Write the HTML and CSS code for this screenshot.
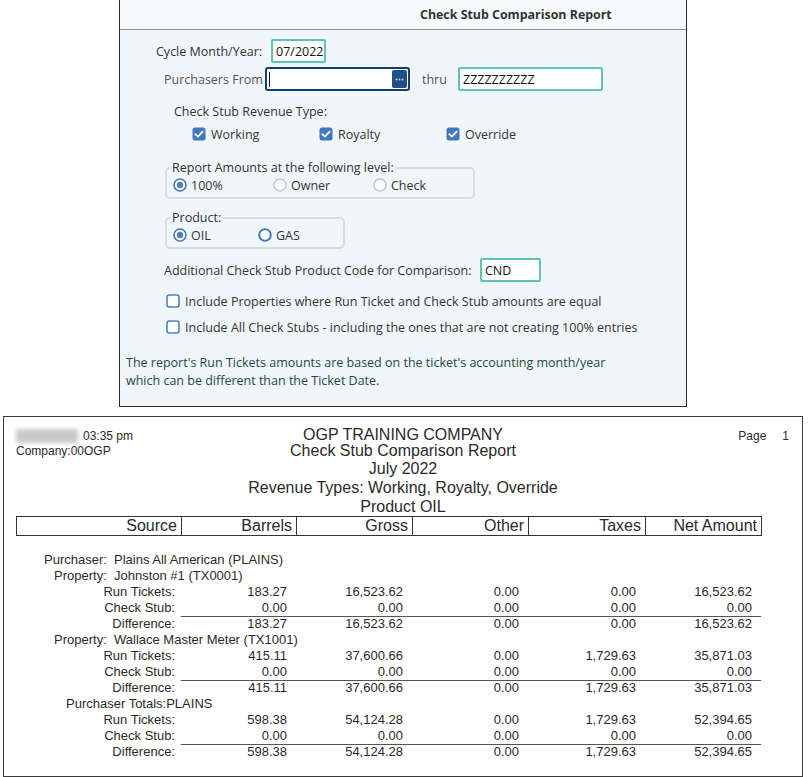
FILE: index.html
```html
<!DOCTYPE html>
<html>
<head>
<meta charset="utf-8">
<link rel="stylesheet" href="styles.css">
</head>
<body>
<div class="panel">
  <div class="panel-head">Check Stub Comparison Report</div>
  <div class="panel-body">
    <div class="row row-cycle">
      <span class="lbl">Cycle Month/Year:</span>
      <span class="input input-cycle">07/2022</span>
    </div>
    <div class="row row-purch">
      <span class="lbl lbl-gray lbl-purch">Purchasers From</span>
      <span class="input input-lookup"><span class="caret"></span><span class="lookup-btn"><svg viewBox="0 0 15 18" width="15" height="18"><circle cx="4.5" cy="9.5" r="1" fill="#c7d4e4"/><circle cx="7.5" cy="9.5" r="1" fill="#c7d4e4"/><circle cx="10.5" cy="9.5" r="1" fill="#c7d4e4"/></svg></span></span>
      <span class="lbl lbl-gray thru">thru</span>
      <span class="input input-thru">ZZZZZZZZZZ</span>
    </div>
    <div class="row row-revtitle"><span class="lbl">Check Stub Revenue Type:</span></div>
    <div class="row row-checks">
      <span class="check-item"><svg class="cb" viewBox="0 0 14 14"><rect x="0.5" y="0.5" width="13" height="13" rx="2.5" fill="#4079c0"/><path d="M3.3 7.2 L5.9 9.6 L10.6 4.6" fill="none" stroke="#fff" stroke-width="1.8" stroke-linecap="round" stroke-linejoin="round"/></svg>Working</span>
      <span class="check-item"><svg class="cb" viewBox="0 0 14 14"><rect x="0.5" y="0.5" width="13" height="13" rx="2.5" fill="#4079c0"/><path d="M3.3 7.2 L5.9 9.6 L10.6 4.6" fill="none" stroke="#fff" stroke-width="1.8" stroke-linecap="round" stroke-linejoin="round"/></svg>Royalty</span>
      <span class="check-item"><svg class="cb" viewBox="0 0 14 14"><rect x="0.5" y="0.5" width="13" height="13" rx="2.5" fill="#4079c0"/><path d="M3.3 7.2 L5.9 9.6 L10.6 4.6" fill="none" stroke="#fff" stroke-width="1.8" stroke-linecap="round" stroke-linejoin="round"/></svg>Override</span>
    </div>
    <fieldset class="group group-level">
      <legend>Report Amounts at the following level:</legend>
      <div class="radios">
        <span class="radio-item w100"><svg class="rb" viewBox="0 0 14 14"><circle cx="7" cy="7" r="6" fill="#fff" stroke="#4a7ab8" stroke-width="1.6"/><circle cx="7" cy="7" r="3.2" fill="#4f80bd"/></svg>100%</span>
        <span class="radio-item w100"><svg class="rb" viewBox="0 0 14 14"><circle cx="7" cy="7" r="6" fill="#fff" stroke="#c3c7cc" stroke-width="1.5"/></svg>Owner</span>
        <span class="radio-item"><svg class="rb" viewBox="0 0 14 14"><circle cx="7" cy="7" r="6" fill="#fff" stroke="#c3c7cc" stroke-width="1.5"/></svg>Check</span>
      </div>
    </fieldset>
    <fieldset class="group group-product">
      <legend>Product:</legend>
      <div class="radios">
        <span class="radio-item w85"><svg class="rb" viewBox="0 0 14 14"><circle cx="7" cy="7" r="6" fill="#fff" stroke="#4a7ab8" stroke-width="1.6"/><circle cx="7" cy="7" r="3.2" fill="#4f80bd"/></svg>OIL</span>
        <span class="radio-item"><svg class="rb" viewBox="0 0 14 14"><circle cx="7" cy="7" r="5.8" fill="#fff" stroke="#3f78bd" stroke-width="2"/></svg>GAS</span>
      </div>
    </fieldset>
    <div class="row row-addl">
      <span class="lbl lbl-addl">Additional Check Stub Product Code for Comparison:</span>
      <span class="input input-cnd">CND</span>
    </div>
    <div class="row row-opt">
      <svg class="cb" viewBox="0 0 14 14"><rect x="1" y="1" width="12" height="12" rx="2.5" fill="#fff" stroke="#4f82bf" stroke-width="1.6"/></svg>
      <span class="lbl">Include Properties where Run Ticket and Check Stub amounts are equal</span>
    </div>
    <div class="row row-opt row-opt2">
      <svg class="cb" viewBox="0 0 14 14"><rect x="1" y="1" width="12" height="12" rx="2.5" fill="#fff" stroke="#4f82bf" stroke-width="1.6"/></svg>
      <span class="lbl">Include All Check Stubs - including the ones that are not creating 100% entries</span>
    </div>
    <p class="note">The report's Run Tickets amounts are based on the ticket's accounting month/year<br>which can be different than the Ticket Date.</p>
  </div>
</div>

<div class="report">
  <div class="rep-head">
    <div class="rep-left">
      <div><span class="blur"></span>03:35 pm</div>
      <div>Company:00OGP</div>
    </div>
    <div class="rep-titles">
      <div class="t1">OGP TRAINING COMPANY</div>
      <div class="t2">Check Stub Comparison Report</div>
      <div class="t3">July 2022</div>
      <div class="t4">Revenue Types: Working, Royalty, Override</div>
      <div class="t5">Product OIL</div>
    </div>
    <div class="rep-right">Page<span class="pgno">1</span></div>
  </div>
  <div class="col-head">
    <div>Source</div><div>Barrels</div><div>Gross</div><div>Other</div><div>Taxes</div><div>Net Amount</div>
  </div>
  <div class="rows">
    <div class="info"><span class="k p-purch">Purchaser:</span><span>Plains All American (PLAINS)</span></div>
    <div class="info"><span class="k p-prop">Property:</span><span>Johnston #1 (TX0001)</span></div>
    <div class="line"><span>Run Tickets:</span><span>183.27</span><span>16,523.62</span><span>0.00</span><span>0.00</span><span>16,523.62</span></div>
    <div class="line"><span>Check Stub:</span><span>0.00</span><span>0.00</span><span>0.00</span><span>0.00</span><span>0.00</span></div>
    <div class="line diff"><span>Difference:</span><span>183.27</span><span>16,523.62</span><span>0.00</span><span>0.00</span><span>16,523.62</span></div>
    <div class="info"><span class="k p-prop">Property:</span><span>Wallace Master Meter (TX1001)</span></div>
    <div class="line"><span>Run Tickets:</span><span>415.11</span><span>37,600.66</span><span>0.00</span><span>1,729.63</span><span>35,871.03</span></div>
    <div class="line"><span>Check Stub:</span><span>0.00</span><span>0.00</span><span>0.00</span><span>0.00</span><span>0.00</span></div>
    <div class="line diff"><span>Difference:</span><span>415.11</span><span>37,600.66</span><span>0.00</span><span>1,729.63</span><span>35,871.03</span></div>
    <div class="totals">Purchaser Totals:PLAINS</div>
    <div class="line"><span>Run Tickets:</span><span>598.38</span><span>54,124.28</span><span>0.00</span><span>1,729.63</span><span>52,394.65</span></div>
    <div class="line"><span>Check Stub:</span><span>0.00</span><span>0.00</span><span>0.00</span><span>0.00</span><span>0.00</span></div>
    <div class="line diff"><span>Difference:</span><span>598.38</span><span>54,124.28</span><span>0.00</span><span>1,729.63</span><span>52,394.65</span></div>
  </div>
</div>
</body>
</html>
```

FILE: styles.css
```css
* { box-sizing: border-box; }
html, body { margin: 0; padding: 0; background: #fff; }
body { width: 809px; height: 777px; overflow: hidden; }

/* ---------- dialog panel ---------- */
.panel {
  margin-left: 119px;
  width: 568px;
  height: 407px;
  border: 1px solid #2b2b2b;
  border-top: none;
  background: #f1f6fb;
  font-family: "Open Sans", "Noto Sans", sans-serif;
  font-size: 12.5px;
  color: #333;
}
.panel-head {
  height: 30px;
  line-height: 29px;
  border-bottom: 1px solid #8a8f94;
  background: #f8fbfd;
  padding-left: 300px;
  font-weight: 700;
  font-size: 12.4px;
  color: #333;
}
.panel-body { padding-top: 9px; }
.row { display: flex; align-items: center; }
.lbl { white-space: nowrap; }
.lbl-gray { color: #555; }

.input {
  display: inline-flex;
  align-items: center;
  height: 24px;
  background: #fff;
  border: 2px solid #5ec3bb;
  border-radius: 2px;
  padding-left: 3px;
  color: #111;
}
.row-cycle { height: 24px; padding-left: 36px; }
.row-cycle .lbl { width: 115px; }
.input-cycle { width: 55px; }

.row-purch { height: 24px; margin-top: 4px; padding-left: 44px; }
.lbl-purch { width: 101px; }
.input-lookup {
  width: 145px;
  border-color: #143e70;
  border-radius: 3px;
  padding: 0 1px 0 2px;
  justify-content: space-between;
}
.caret { width: 1px; height: 15px; background: #111; }
.lookup-btn {
  display: block;
  width: 15px; height: 18px;
  background: #1f4f88;
  border-radius: 2px;
}
.lookup-btn svg { display: block; }
.thru { width: 48px; padding-left: 12px; }
.input-thru { width: 145px; }

.row-revtitle { height: 20px; margin-top: 10px; padding-left: 54px; }
.row-checks { height: 20px; margin-top: 3px; padding-left: 72px; }
.check-item { display: inline-flex; align-items: center; width: 127px; }
.cb { width: 14px; height: 14px; margin-right: 5px; flex: none; }

.group {
  margin: 16px 0 0 45px;
  padding: 0 4px 3px 5px;
  border: 2px solid #d9dde2;
  border-radius: 5px;
  min-inline-size: 0;
}
.group legend { padding: 0 1px; line-height: 16px; margin-left: -1px; }
.group-level { width: 310px; }
.group-product { width: 180px; margin-top: 11px; }
.radios { display: flex; align-items: center; height: 18px; padding-left: 1px; }
.radio-item { display: inline-flex; align-items: center; }
.w100 { width: 100px; }
.w85 { width: 85px; }
.rb { width: 14px; height: 14px; margin-right: 4px; flex: none; }

.row-addl { height: 24px; margin-top: 9px; padding-left: 44px; }
.lbl-addl { width: 316px; }
.input-cnd { width: 61px; }

.row-opt { height: 20px; margin-top: 9px; padding-left: 46px; }
.row-opt2 { margin-top: 6px; }

.note {
  margin: 17px 0 0 6px;
  line-height: 18px;
  color: #1f4a3d;
}

/* ---------- report ---------- */
.report {
  margin: 9px 0 0 3px;
  width: 800px;
  height: 361px;
  border: 1px solid #3a3a3a;
  background: #fff;
  font-family: "Liberation Sans", Arial, sans-serif;
  color: #2a2a2a;
}
.rep-head {
  display: grid;
  grid-template-columns: 1fr auto 1fr;
  padding-top: 10px;
}
.rep-left { font-size: 12px; line-height: 15px; padding-left: 12px; padding-top: 2px; }
.blur {
  display: inline-block;
  width: 62px; height: 14px;
  background: #c9c9c9;
  filter: blur(2px);
  vertical-align: -3px;
  margin-right: 5px;
}
.rep-titles { text-align: center; font-size: 16px; }
.t1, .t2 { line-height: 16px; }
.t3 { line-height: 19px; }
.t4 { line-height: 20px; }
.t5 { line-height: 18px; }
.rep-right { font-size: 12px; line-height: 15px; text-align: right; padding: 2px 13px 0 0; }
.pgno { margin-left: 16px; }

.col-head {
  display: grid;
  grid-template-columns: 164px 115px 116px 116px 117px 116px;
  margin-left: 12px;
  width: 746px;
  height: 20px;
  border: 1px solid #333;
  font-size: 16px;
  line-height: 18px;
}
.col-head div { text-align: right; padding-right: 4px; }
.col-head div + div { border-left: 1px solid #333; }

.rows { margin: 16px 0 0 12px; font-size: 13px; }
.info { display: grid; grid-template-columns: 98px auto; height: 16px; line-height: 16px; }
.p-purch { padding-left: 28px; }
.p-prop { padding-left: 38px; }
.totals { height: 16px; line-height: 16px; padding-left: 50px; }
.line {
  display: grid;
  grid-template-columns: 165px 115px 116px 116px 117px 116px;
  height: 16px;
  line-height: 16px;
}
.line span { text-align: right; padding-right: 9px; }
.line span:first-child { padding-right: 6px; }
.diff span + span { border-top: 1px solid #555; line-height: 14px; }
```
